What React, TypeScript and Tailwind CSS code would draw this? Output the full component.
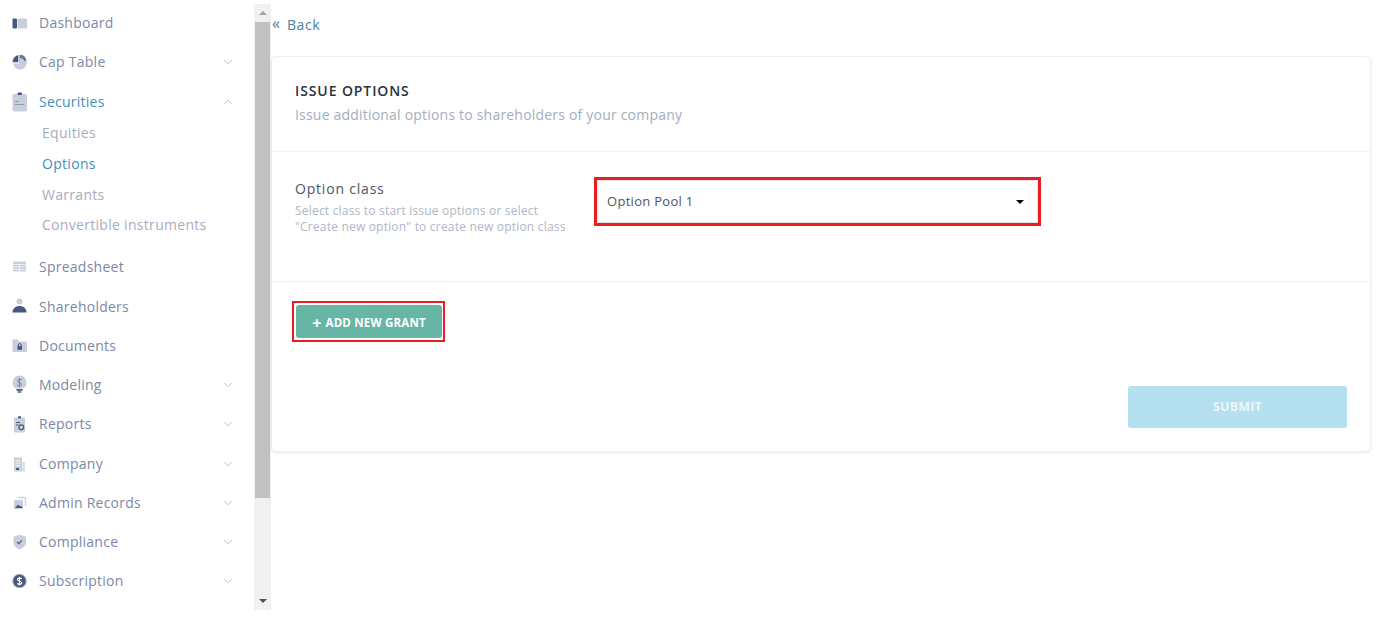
import React from "react";
import { ChevronDown, ChevronUp } from "lucide-react";

const L = "#c8cedb";
const D = "#47587f";

const icons: Record<string, React.ReactNode> = {
  dashboard: (
    <>
      <rect x="0.5" y="3.5" width="4.5" height="10" rx="1" fill={D} />
      <rect x="5.5" y="3.5" width="9.5" height="10" rx="1" fill={L} />
    </>
  ),
  cap: (
    <>
      <path d="M7.5 1.5A7 7 0 1 1 1 9.5H7.5Z" fill={L} />
      <path d="M6.3 1V8.2H0.7A7 7 0 0 1 6.3 1Z" fill={D} />
      <path d="M7.5 0.8A7 7 0 0 1 14.4 6.5L7.5 8.5Z" fill="#66759a" />
      <path d="M7.5 4A5 5 0 0 1 12.5 7.5L7.5 9Z" fill={L} />
    </>
  ),
  securities: (
    <>
      <rect x="0.5" y="2" width="14.5" height="17.5" rx="1.5" fill={L} />
      <rect x="5.5" y="0.5" width="4.5" height="2.5" rx="1" fill={D} />
      <rect x="3" y="9" width="4" height="1" fill="#8f9ab3" />
      <rect x="3" y="12" width="9" height="1" fill="#8f9ab3" />
    </>
  ),
  spreadsheet: (
    <>
      <rect x="1" y="2.5" width="13" height="10" rx="1" fill={L} />
      <path d="M1 5.5H14M1 8H14M1 10.5H14M7.5 5.5V12.5" stroke="#f5f6f9" strokeWidth="0.8" />
    </>
  ),
  shareholders: (
    <>
      <circle cx="7.5" cy="2.5" r="3" fill={L} />
      <path d="M0.5 13.5C0.5 9.5 3.5 7 7.5 7S14.5 9.5 14.5 13.5Z" fill={D} />
    </>
  ),
  documents: (
    <>
      <path d="M0.5 2.5Q0.5 1.5 1.5 1.5H5.5L7 3.5H14Q15 3.5 15 4.5V13Q15 14 14 14H1.5Q0.5 14 0.5 13Z" fill={L} />
      <rect x="5.5" y="8" width="4.5" height="3.8" fill={D} />
      <path d="M6.3 8V7A1.4 1.4 0 0 1 9.2 7V8" stroke={D} fill="none" />
    </>
  ),
  modeling: (
    <>
      <path d="M7.5 0.5A7 7 0 0 0 4 13.5H11A7 7 0 0 0 7.5 0.5Z" fill={L} />
      <rect x="4.5" y="14" width="6" height="1.8" fill={D} />
      <rect x="5.5" y="16.2" width="4" height="1.6" rx="0.8" fill={D} />
      <path d="M10 5C9 3.9 5.6 3.9 5.6 5.9S9.6 7.6 9.6 9.4 6.4 11.2 5.2 10M7.5 2.8V12.4" stroke="#7b88a6" strokeWidth="1" fill="none" />
    </>
  ),
  reports: (
    <>
      <rect x="2" y="1.5" width="11" height="15" rx="1" fill={L} />
      <rect x="6" y="0.3" width="3" height="2" fill={D} />
      <rect x="4" y="6" width="4" height="1" fill={D} />
      <rect x="4" y="8.5" width="2.5" height="1" fill={D} />
      <circle cx="9.3" cy="11.3" r="2.4" fill="none" stroke={D} strokeWidth="1.2" />
    </>
  ),
  company: (
    <>
      <rect x="2" y="1.5" width="8" height="14" fill={L} />
      <rect x="10" y="6" width="3" height="9.5" fill="#dde1e9" />
      <path d="M3.5 4.5H8.5M3.5 7H8.5M3.5 9.5H8.5" stroke="#f3f4f7" strokeWidth="1" />
      <rect x="4" y="12" width="3" height="2" fill={D} />
    </>
  ),
  admin: (
    <>
      <path d="M6.5 2.5H12.5A1 1 0 0 1 13.5 3.5V11" stroke={L} strokeWidth="1.3" fill="none" />
      <rect x="2" y="5" width="9" height="9" rx="1" fill={L} />
      <path d="M3 13L6 9.5L8 11.5L9 10.5L10.5 13Z" fill={D} />
    </>
  ),
  compliance: (
    <>
      <path d="M7.5 0.8L14 2.8V8.5C14 11.5 11 14 7.5 15.5C4 14 1.5 11.5 1.5 8.5V2.8Z" fill={L} />
      <path d="M5 8L6.8 9.6L10 6.4" stroke={D} strokeWidth="1.2" fill="none" />
    </>
  ),
  subscription: (
    <>
      <circle cx="7.5" cy="8" r="7" fill={D} />
      <circle cx="7.5" cy="8" r="6.7" fill="none" stroke={L} strokeWidth="0.8" />
      <path d="M9.8 5.8C9 4.8 5.5 4.6 5.5 6.5S9.8 8 9.8 9.8 6.3 11.8 5.3 10.4M7.5 3.8V12.4" stroke="#fff" strokeWidth="1.2" fill="none" />
    </>
  ),
};

function NavIcon({ name }: { name: string }) {
  return (
    <svg width="16" height="20" viewBox="0 0 16 20" className="shrink-0">
      <g transform={name === "securities" || name === "modeling" ? "" : "translate(0 2)"}>{icons[name]}</g>
    </svg>
  );
}

function NavRow({ icon, label, chevron, active }: { icon: string; label: string; chevron?: "down" | "up"; active?: boolean }) {
  return (
    <div className="flex h-[39.25px] items-center pl-[12px] pr-[19px]">
      <NavIcon name={icon} />
      <span className={`ml-[11px] flex-1 pb-[1px] text-[14px] tracking-[0.25px] ${active ? "text-[#3f8fc0]" : "text-[#7b88a8]"}`}>{label}</span>
      {chevron === "down" && <ChevronDown size={14} strokeWidth={1} className="text-[#8a93a8]" />}
      {chevron === "up" && <ChevronUp size={14} strokeWidth={1} className="text-[#8a93a8]" />}
    </div>
  );
}

function SubRow({ label, active }: { label: string; active?: boolean }) {
  return (
    <div className={`flex h-[30.75px] items-center pb-[1px] pl-[42px] text-[14px] tracking-[0.3px] ${active ? "text-[#3f8fc0]" : "text-[#a6adbf]"}`}>{label}</div>
  );
}

function Sidebar() {
  return (
    <aside className="w-[254px] shrink-0 pt-[3.5px]">
      <NavRow icon="dashboard" label="Dashboard" />
      <NavRow icon="cap" label="Cap Table" chevron="down" />
      <NavRow icon="securities" label="Securities" chevron="up" active />
      <div className="-mt-[3.5px] mb-[7px]">
        <SubRow label="Equities" />
        <SubRow label="Options" active />
        <SubRow label="Warrants" />
        <SubRow label="Convertible instruments" />
      </div>
      <NavRow icon="spreadsheet" label="Spreadsheet" />
      <NavRow icon="shareholders" label="Shareholders" />
      <NavRow icon="documents" label="Documents" />
      <NavRow icon="modeling" label="Modeling" chevron="down" />
      <NavRow icon="reports" label="Reports" chevron="down" />
      <NavRow icon="company" label="Company" chevron="down" />
      <NavRow icon="admin" label="Admin Records" chevron="down" />
      <NavRow icon="compliance" label="Compliance" chevron="down" />
      <NavRow icon="subscription" label="Subscription" chevron="down" />
    </aside>
  );
}

function Scrollbar() {
  return (
    <div className="mt-[4px] flex h-[606px] w-[17px] shrink-0 flex-col bg-[#f1f1f1]">
      <div className="flex h-[18px] items-center justify-center">
        <div className="h-0 w-0 border-x-[4px] border-b-[4px] border-x-transparent border-b-[#a3a3a3]" />
      </div>
      <div className="mx-[1px] h-[476px] bg-[#c1c1c1]" />
      <div className="flex-1" />
      <div className="flex h-[18px] items-center justify-center">
        <div className="h-0 w-0 border-x-[4px] border-t-[4px] border-x-transparent border-t-[#505050]" />
      </div>
    </div>
  );
}

export default function App() {
  return (
    <div className="flex h-[617px] w-[1377px] overflow-hidden bg-white" style={{ fontFamily: '"Open Sans", "Noto Sans", sans-serif' }}>
      <Sidebar />
      <Scrollbar />
      <main className="min-w-0 flex-1 pr-[6px]">
        <div className="flex h-[56px] items-start pl-[1px] pt-[13px] text-[#4a7fa3]">
          <span className="text-[16px] leading-[20px]">«</span>
          <span className="ml-[7px] pt-[1px] text-[14px] leading-[22px] tracking-[0.6px]">Back</span>
        </div>
        <section className="h-[396px] rounded-[5px] border border-[#eeeff1] bg-white shadow-[0_1px_3px_rgba(0,0,0,0.08)]">
          <header className="h-[95px] border-b border-[#f0f1f3] pl-[23px] pt-[24px]">
            <h1 className="text-[14px] font-semibold leading-[20px] tracking-[0.9px] text-[#2b3242]">ISSUE OPTIONS</h1>
            <p className="mt-[4px] text-[14px] leading-[20px] tracking-[0.2px] text-[#a6adbf]">Issue additional options to shareholders of your company</p>
          </header>
          <div className="flex h-[130px] border-b border-[#f0f1f3] pl-[23px] pt-[25px]">
            <div className="w-[299px] shrink-0">
              <div className="pt-[1px] text-[14px] leading-[22px] tracking-[0.8px] text-[#4b5568]">Option class</div>
              <div className="mt-[3px] text-[12px] leading-[16px] tracking-[0.2px] text-[#b0b6c5]">
                Select class to start issue options or select
                <br />
                "Create new option" to create new option class
              </div>
            </div>
            <div className="h-[49px] w-[447px] border-[3px] border-[#ed1c24]">
              <div className="flex h-full items-center justify-between border border-[#e4e6ea] pl-[9px] pr-[13px]">
                <span className="text-[13px] tracking-[0.3px] text-[#4f5560]">Option Pool 1</span>
                <span className="h-0 w-0 border-x-[4px] border-t-[4px] border-x-transparent border-t-black" />
              </div>
            </div>
          </div>
          <div className="pl-[20px] pt-[19px]">
            <div className="inline-block border-[2px] border-[#ed1c24] py-[2px] pl-[2px] pr-[1px]">
              <button className="flex h-[33px] w-[146px] items-center justify-center gap-[4px] rounded-[3px] bg-[#66b5a5] pt-[2px] text-[11.5px] font-bold tracking-[0.2px] text-white">
                <span className="text-[16px] leading-none">+</span> ADD NEW GRANT
              </button>
            </div>
          </div>
          <div className="flex justify-end pr-[23px] pt-[44px]">
            <button className="h-[42px] w-[219px] rounded-[3px] bg-[#b4e0ef] text-[12.5px] font-bold tracking-[0.2px] text-[#eaf7fb]">SUBMIT</button>
          </div>
        </section>
      </main>
    </div>
  );
}
